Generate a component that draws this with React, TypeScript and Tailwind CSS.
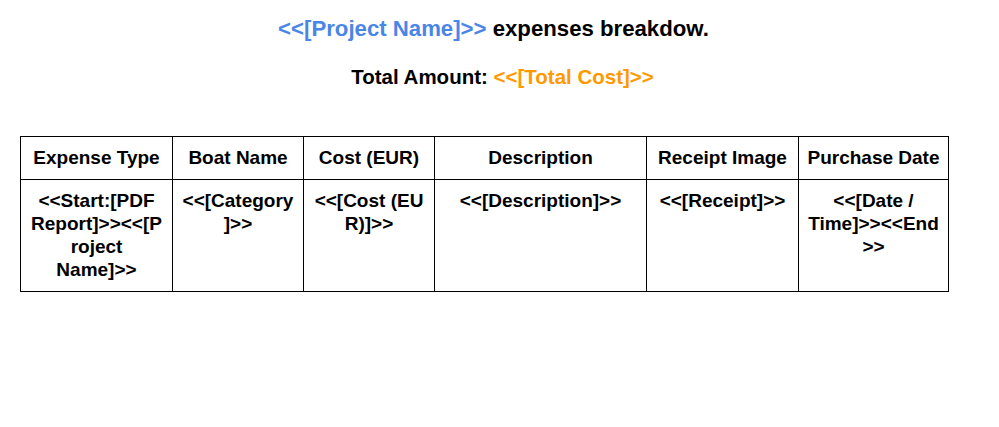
import React from "react";

const headers = ["Expense Type", "Boat Name", "Cost (EUR)", "Description", "Receipt Image", "Purchase Date"];
const widths = ["w-[152px]", "w-[131px]", "w-[131px]", "w-[212px]", "w-[152px]", "w-[150px]"];
const body: string[][] = [
  ["<<Start:[PDF", "Report]>><<[P", "roject", "Name]>>"],
  ["<<[Category", "]>>"],
  ["<<[Cost (EU", "R)]>>"],
  ["<<[Description]>>"],
  ["<<[Receipt]>>"],
  ["<<[Date /", "Time]>><<End", ">>"],
];

export default function App() {
  return (
    <div className="w-[999px] h-[427px] bg-white font-['Liberation_Sans',Arial,sans-serif] font-bold text-black">
      <div className="pt-[16px] pr-[12px] text-center text-[22.2px] leading-[25px]">
        <span className="text-[#4a86e8]">{"<<[Project Name]>>"}</span> expenses breakdow.
      </div>
      <div className="mt-[24px] pl-[6px] text-center text-[20.5px] leading-[24px]">
        Total Amount: <span className="text-[#ff9900]">{"<<[Total Cost]>>"}</span>
      </div>
      <div className="mt-[47px] pl-[20px]">
        <table className="border-collapse table-fixed w-[929px] text-[19px] leading-[23px]">
          <thead>
            <tr>
              {headers.map((h, i) => (
                <th key={h} className={`${widths[i]} border border-black px-[2px] pt-[9px] pb-[10px] text-center font-bold`}>
                  {h}
                </th>
              ))}
            </tr>
          </thead>
          <tbody>
            <tr>
              {body.map((lines, i) => (
                <td key={i} className="border border-black px-[2px] pt-[9px] pb-[10px] h-[112px] align-top text-center">
                  {lines.map((l, j) => (
                    <div key={j} className="whitespace-nowrap">{l}</div>
                  ))}
                </td>
              ))}
            </tr>
          </tbody>
        </table>
      </div>
    </div>
  );
}
